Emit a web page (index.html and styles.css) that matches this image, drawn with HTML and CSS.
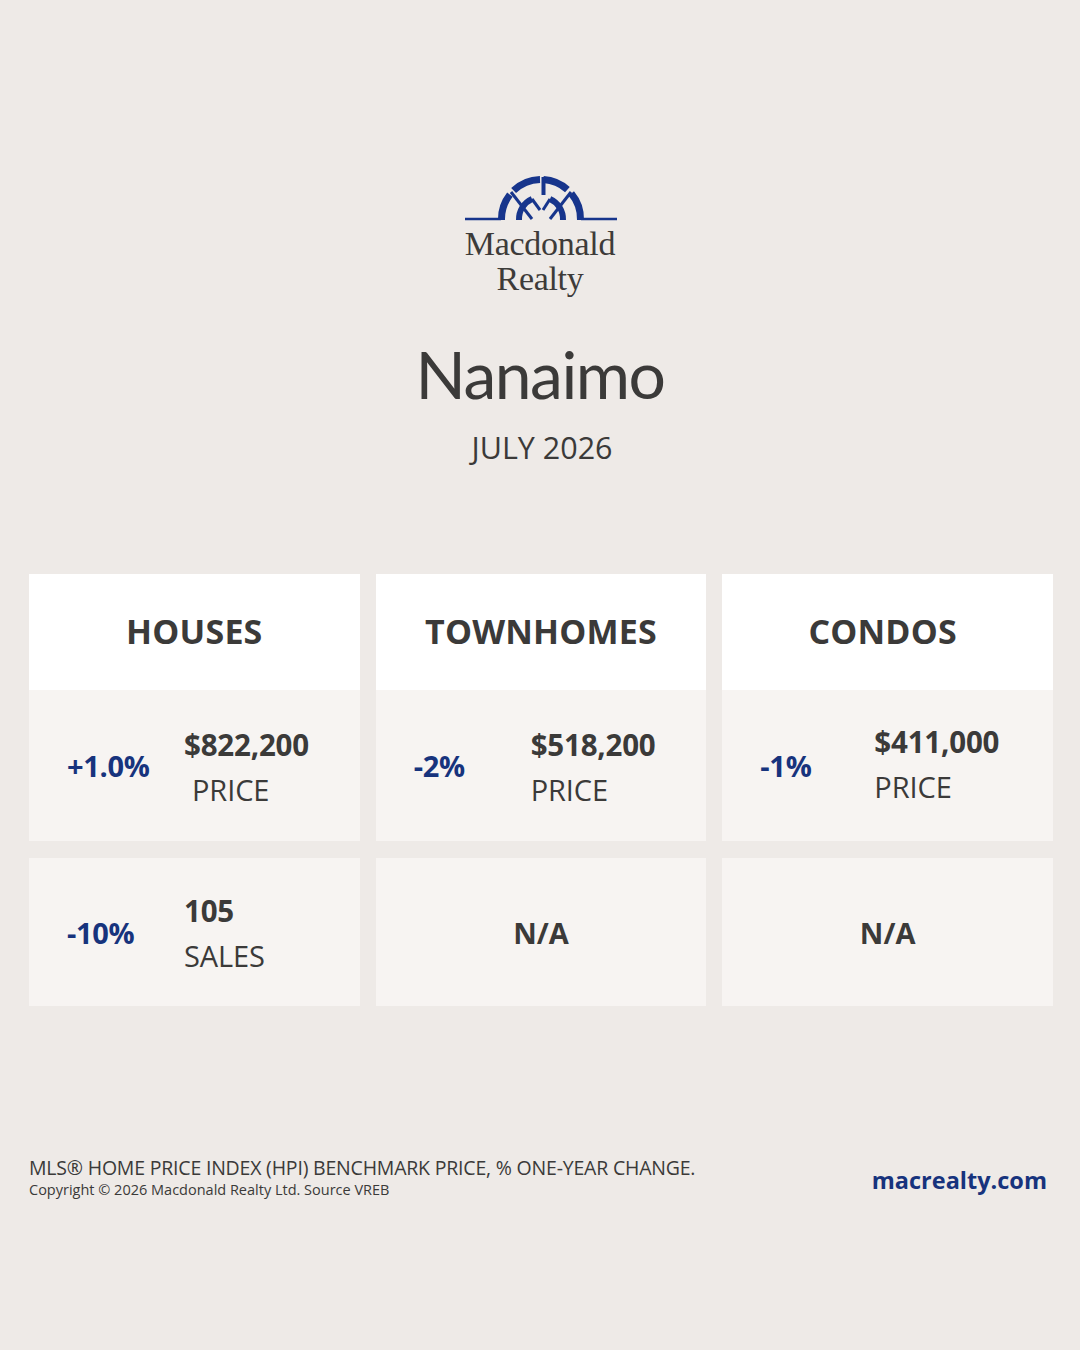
FILE: index.html
```html
<!DOCTYPE html>
<html lang="en">
<head>
<meta charset="utf-8">
<title>Nanaimo – July 2026</title>
<link rel="stylesheet" href="styles.css">
</head>
<body>
<main class="page">
  <header class="brand">
    <svg class="logo-mark" viewBox="0 0 156 46" width="156" height="46" aria-hidden="true">
      <g fill="none" stroke="#17358c">
        <line x1="2" y1="44" x2="38" y2="44" stroke-width="2.6"/>
        <line x1="118" y1="44" x2="154" y2="44" stroke-width="2.6"/>
        <path d="M38.5 45 A39.5 39.5 0 0 1 46.9 19.7" stroke-width="7"/>
        <path d="M50.6 15.6 A39.5 39.5 0 0 1 77 4.5" stroke-width="7"/>
        <path d="M80.5 4.5 A39.5 39.5 0 0 1 104.4 14.6" stroke-width="7"/>
        <path d="M108.3 18.6 A39.5 39.5 0 0 1 117.5 45" stroke-width="7"/>
        <line x1="80.5" y1="2" x2="80.5" y2="20" stroke-width="4"/>
        <path d="M56 45 A22 22 0 0 1 69 24" stroke-width="6"/>
        <path d="M87 24 A22 22 0 0 1 100 45" stroke-width="6"/>
        <line x1="48" y1="17" x2="69" y2="44" stroke-width="3"/>
        <line x1="108" y1="17" x2="87" y2="44" stroke-width="3"/>
        <line x1="69" y1="24" x2="77" y2="35" stroke-width="3"/>
        <line x1="87" y1="24" x2="80" y2="35" stroke-width="3"/>
      </g>
    </svg>
    <div class="brand-name">Macdonald<br>Realty</div>
  </header>

  <section class="title">
    <h1 class="city">Nanaimo</h1>
    <p class="period">JULY 2026</p>
  </section>

  <section class="stats">
    <div class="cell head">HOUSES</div>
    <div class="cell head">TOWNHOMES</div>
    <div class="cell head head-shift">CONDOS</div>

    <div class="cell body">
      <span class="pct">+1.0%</span>
      <span class="val"><b>$822,200</b><span class="label label-indent">PRICE</span></span>
    </div>
    <div class="cell body">
      <span class="pct">-2%</span>
      <span class="val"><b>$518,200</b><span class="label">PRICE</span></span>
    </div>
    <div class="cell body body-up">
      <span class="pct pct-narrow">-1%</span>
      <span class="val"><b>$411,000</b><span class="label">PRICE</span></span>
    </div>

    <div class="cell body second">
      <span class="pct">-10%</span>
      <span class="val"><b>105</b><span class="label">SALES</span></span>
    </div>
    <div class="cell body second na">N/A</div>
    <div class="cell body second na">N/A</div>
  </section>

  <footer class="foot">
    <div class="notes">
      <p class="note">MLS® HOME PRICE INDEX (HPI) BENCHMARK PRICE, % ONE-YEAR CHANGE.</p>
      <p class="copy">Copyright © 2026 Macdonald Realty Ltd. Source VREB</p>
    </div>
    <div class="site">macrealty.com</div>
  </footer>
</main>
</body>
</html>
```

FILE: styles.css
```css
* { box-sizing: border-box; }

html, body {
  margin: 0;
  padding: 0;
}

body {
  width: 1080px;
  height: 1350px;
  background: #eeeae7;
  color: #3b3a39;
  font-family: "Open Sans", "Liberation Sans", sans-serif;
  overflow: hidden;
}

.page {
  display: flex;
  flex-direction: column;
  height: 1350px;
}

.brand {
  display: flex;
  flex-direction: column;
  align-items: center;
  padding-top: 175px;
}

.logo-mark {
  display: block;
  margin-left: 2px;
}

.brand-name {
  margin-top: 5px;
  font-family: "Liberation Serif", "DejaVu Serif", serif;
  font-size: 34px;
  line-height: 35px;
  text-align: center;
  color: #3d3b39;
  letter-spacing: -0.3px;
}

.title {
  display: flex;
  flex-direction: column;
  align-items: center;
}

.city {
  margin: 43px 0 0;
  font-family: Lato, "Noto Sans", sans-serif;
  font-weight: 400;
  font-size: 66px;
  line-height: 70px;
  letter-spacing: -1.5px;
  color: #3b3a39;
}

.period {
  margin: 20px 0 0;
  font-size: 30.5px;
  line-height: 36px;
  color: #3b3a39;
  padding-left: 4px;
}

.stats {
  display: grid;
  grid-template-columns: repeat(3, 1fr);
  grid-template-rows: 116px 151px 165px;
  column-gap: 16px;
  padding: 0 27px 0 29px;
  margin-top: 109px;
}

.cell {
  display: flex;
  align-items: center;
}

.head {
  justify-content: center;
  background: #ffffff;
  font-weight: 700;
  font-size: 34px;
  letter-spacing: 0.2px;
  color: #3b3a39;
  padding-bottom: 3px;
}

.head-shift {
  padding-right: 10px;
}

.body {
  background: #f7f4f2;
  padding-left: 38px;
}

.second {
  margin-top: 17px;
}

.pct {
  width: 117px;
  flex: none;
  font-weight: 700;
  font-size: 29px;
  color: #17337d;
  letter-spacing: -0.3px;
}

.pct-narrow {
  width: 114px;
}

.val {
  display: flex;
  flex-direction: column;
  gap: 1px;
  margin-top: 3px;
}

.body-up .val {
  margin-top: -3px;
}

.val b {
  font-weight: 700;
  font-size: 29.5px;
  line-height: 44px;
  letter-spacing: -0.2px;
}

.label {
  font-size: 29px;
  line-height: 44px;
  letter-spacing: -0.1px;
}

.label-indent {
  padding-left: 8px;
}

.na {
  justify-content: center;
  padding-left: 0;
  font-weight: 700;
  font-size: 29px;
}

.foot {
  display: flex;
  align-items: center;
  justify-content: space-between;
  padding: 0 33px 0 29px;
  margin-top: 150px;
}

.note {
  margin: 0;
  font-size: 19.5px;
  line-height: 24px;
  letter-spacing: -0.2px;
  color: #3b3a39;
}

.copy {
  margin: 1px 0 0;
  font-size: 14.5px;
  line-height: 18px;
  color: #3b3a39;
}

.site {
  font-weight: 700;
  font-size: 23.5px;
  color: #17337d;
  margin-top: 4px;
}
```
